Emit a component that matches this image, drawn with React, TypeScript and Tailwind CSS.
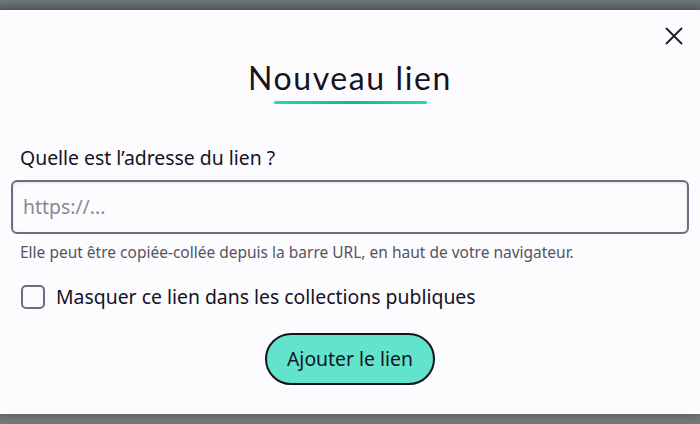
import React from "react";

export default function App() {
  return (
    <div className="w-[700px] h-[424px] bg-[#75787a] overflow-hidden" style={{ fontFamily: '"Noto Sans", "Open Sans", sans-serif' }}>
      <div className="h-[10px] bg-gradient-to-b from-[#6d7777] to-[#5f6464]" />
      <div className="relative h-[404px] bg-[#fcfcff] shadow-[0_0_8px_rgba(0,0,0,0.35)] flex flex-col">
        <button className="absolute right-[17px] top-[17px] w-[18px] h-[18px] text-[#1c1a2e]" aria-label="Fermer">
          <svg viewBox="0 0 18 18" width="18" height="18" fill="none" stroke="currentColor" strokeWidth="1.8" strokeLinecap="round">
            <path d="M1.5 1.5 L16.5 16.5 M16.5 1.5 L1.5 16.5" />
          </svg>
        </button>
        <div className="flex flex-col items-center pt-[48px]">
          <h1 className="text-[32px] leading-[40px] text-[#15131f] tracking-[1.6px]" style={{ fontFamily: 'Lato, "Noto Sans", sans-serif' }}>
            Nouveau lien
          </h1>
          <div className="mt-[3px] w-[153px] h-[3px] rounded-full bg-gradient-to-r from-[#2dd4b4] via-[#0db896] to-[#2dd4b4]" />
        </div>
        <div className="px-[11px] pt-[41px]">
          <label className="block pl-[9px] text-[19.4px] leading-[25px] text-[#15131f]">Quelle est l’adresse du lien ?</label>
          <div className="mt-[10px] h-[54px] rounded-[6px] border-2 border-[#6f6c82] shadow-[inset_0_1px_3px_rgba(0,0,0,0.12)] bg-[#fcfcff] flex items-center px-[10px]">
            <span className="text-[19.4px] text-[#8a8a93]">https://...</span>
          </div>
          <p className="mt-[8px] pl-[9px] text-[15.5px] leading-[20px] text-[#55535f]">
            Elle peut être copiée-collée depuis la barre URL, en haut de votre navigateur.
          </p>
          <div className="mt-[22px] pl-[10px] flex items-center gap-[11px]">
            <div className="w-[24px] h-[24px] rounded-[5px] border-2 border-[#6f6c82] bg-[#fcfcff]" />
            <span className="text-[19.4px] leading-[25px] text-[#15131f]">Masquer ce lien dans les collections publiques</span>
          </div>
          <div className="mt-[24px] flex justify-center">
            <button className="w-[170px] h-[52px] rounded-full bg-[#62e3cc] border-2 border-[#15131f] text-[19.4px] text-[#15131f]">
              Ajouter le lien
            </button>
          </div>
        </div>
      </div>
    </div>
  );
}
